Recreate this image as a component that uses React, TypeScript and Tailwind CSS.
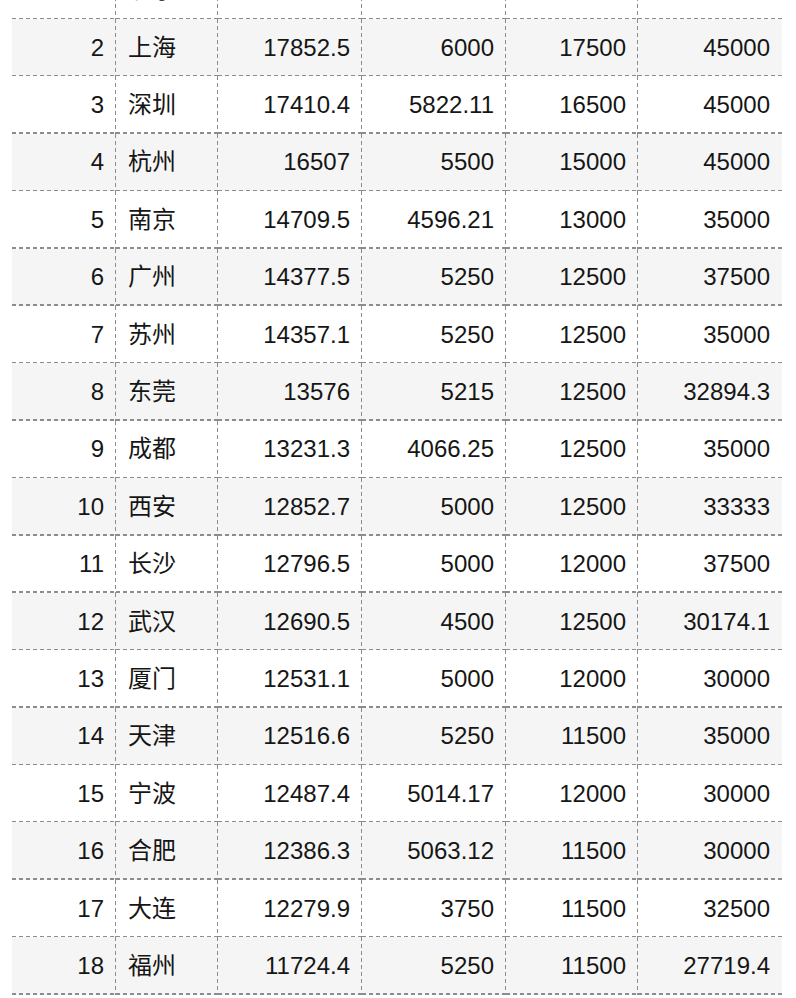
const rows: [number, string, string, string, string, string][] = [
  [1, '北京', '18188.3', '6500', '17500', '50000'],
  [2, '上海', '17852.5', '6000', '17500', '45000'],
  [3, '深圳', '17410.4', '5822.11', '16500', '45000'],
  [4, '杭州', '16507', '5500', '15000', '45000'],
  [5, '南京', '14709.5', '4596.21', '13000', '35000'],
  [6, '广州', '14377.5', '5250', '12500', '37500'],
  [7, '苏州', '14357.1', '5250', '12500', '35000'],
  [8, '东莞', '13576', '5215', '12500', '32894.3'],
  [9, '成都', '13231.3', '4066.25', '12500', '35000'],
  [10, '西安', '12852.7', '5000', '12500', '33333'],
  [11, '长沙', '12796.5', '5000', '12000', '37500'],
  [12, '武汉', '12690.5', '4500', '12500', '30174.1'],
  [13, '厦门', '12531.1', '5000', '12000', '30000'],
  [14, '天津', '12516.6', '5250', '11500', '35000'],
  [15, '宁波', '12487.4', '5014.17', '12000', '30000'],
  [16, '合肥', '12386.3', '5063.12', '11500', '30000'],
  [17, '大连', '12279.9', '3750', '11500', '32500'],
  [18, '福州', '11724.4', '5250', '11500', '27719.4'],
]

// dashed lines drawn as repeating gradients: 4px dash, 3px gap
const cell =
  'h-[57.4px] px-3 align-middle ' +
  '[background-image:linear-gradient(to_right,#8c8c8c_4px,transparent_4px),linear-gradient(to_bottom,#8c8c8c_4px,transparent_4px)] ' +
  '[background-size:7px_1.5px,1.5px_7px] [background-repeat:repeat-x,repeat-y] [background-position:left_bottom,right_top]'
const lastCell =
  'h-[57.4px] px-3 align-middle ' +
  '[background-image:linear-gradient(to_right,#8c8c8c_4px,transparent_4px)] ' +
  '[background-size:7px_1.5px] [background-repeat:repeat-x] [background-position:left_bottom]'

export default function App() {
  return (
    <div
      className="h-[998px] w-[796px] overflow-hidden bg-white text-[24px] text-[#161616]"
      style={{ fontFamily: '"Liberation Sans", "Noto Sans CJK SC", sans-serif' }}
    >
      <table className="mx-[12px] mt-[-38.4px] w-[770px] table-fixed border-collapse">
        <colgroup>
          <col className="w-[104px]" />
          <col className="w-[102px]" />
          <col className="w-[144px]" />
          <col className="w-[144px]" />
          <col className="w-[132px]" />
          <col className="w-[144px]" />
        </colgroup>
        <tbody>
          {rows.map((r) => (
            <tr key={r[0]} className={r[0] % 2 === 0 ? 'bg-[#f5f5f5]' : 'bg-white'}>
              <td className={`${cell} text-right`}>{r[0]}</td>
              <td className={`${cell} text-left`}>{r[1]}</td>
              <td className={`${cell} text-right`}>{r[2]}</td>
              <td className={`${cell} text-right`}>{r[3]}</td>
              <td className={`${cell} text-right`}>{r[4]}</td>
              <td className={`${lastCell} text-right`}>{r[5]}</td>
            </tr>
          ))}
        </tbody>
      </table>
    </div>
  )
}
